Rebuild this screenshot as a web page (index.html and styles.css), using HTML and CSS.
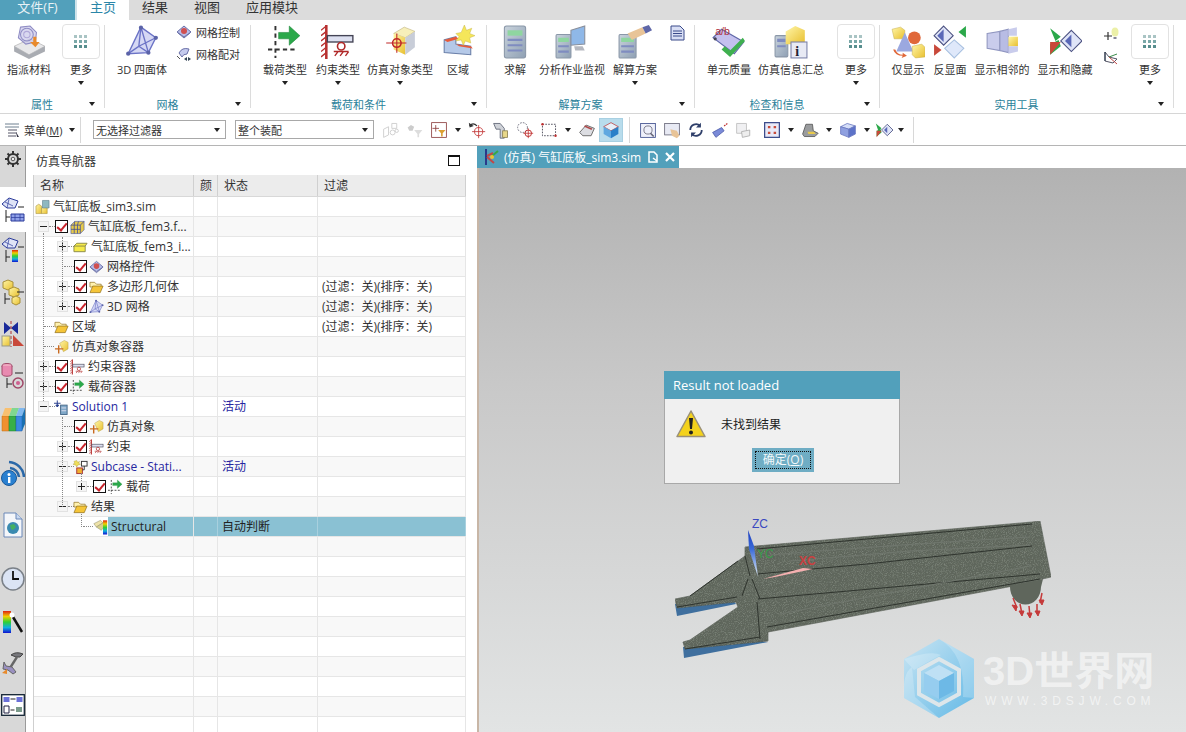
FILE: index.html
```html
<!DOCTYPE html>
<html lang="zh">
<head>
<meta charset="utf-8">
<title>仿真导航器</title>
<link rel="stylesheet" href="styles.css">
</head>
<body>
<svg class="defs" width="0" height="0">
<defs>
<linearGradient id="gy" x1="0" y1="0" x2="1" y2="1"><stop offset="0" stop-color="#fff6a8"/><stop offset="1" stop-color="#e8bf2e"/></linearGradient>
<linearGradient id="gb" x1="0" y1="0" x2="1" y2="1"><stop offset="0" stop-color="#dfe4f7"/><stop offset="1" stop-color="#8f9ad6"/></linearGradient>
<linearGradient id="gs" x1="0" y1="0" x2="1" y2="1"><stop offset="0" stop-color="#c9d3dc"/><stop offset="1" stop-color="#8fa0b4"/></linearGradient>
<linearGradient id="rb" x1="0" y1="0" x2="0" y2="1"><stop offset="0" stop-color="#e02010"/><stop offset=".25" stop-color="#f0d000"/><stop offset=".5" stop-color="#30d030"/><stop offset=".75" stop-color="#10b0e0"/><stop offset="1" stop-color="#1010d0"/></linearGradient>
<linearGradient id="hx" x1="0" y1="0" x2="1" y2="1"><stop offset="0" stop-color="#c9e5f3"/><stop offset="1" stop-color="#63b9e6"/></linearGradient>
<linearGradient id="zaxis" x1="0" y1="0" x2="0" y2="1"><stop offset="0" stop-color="#1a3cc0"/><stop offset=".4" stop-color="#3a6ad8"/><stop offset="1" stop-color="#e4f0f8"/></linearGradient>
<filter id="speck" x="0" y="0" width="100%" height="100%"><feTurbulence type="fractalNoise" baseFrequency="1.100" numOctaves="1" seed="4" result="n"/><feColorMatrix in="n" type="matrix" values="0 0 0 0 .22  0 0 0 0 .25  0 0 0 0 .21  0 0 0 2.600 -1.200" result="d"/><feComposite in="d" in2="SourceAlpha" operator="in" result="c"/><feMerge><feMergeNode in="SourceGraphic"/><feMergeNode in="c"/></feMerge></filter>

<symbol id="i-mat" viewBox="0 0 32 32"><path d="M2 20l15-7 14 7-15 8z" fill="#e8e8ea" stroke="#aaa" stroke-width=".6"/><path d="M2 20v5l14 7v-4zM31 20v5l-15 7v-4z" fill="#a9acb2"/><path d="M8 2l9-1 6 6-1 9-9 2-7-6z" fill="#c9c7ea" fill-opacity=".7" stroke="#8f8cc4"/><circle cx="14" cy="9" r="6" fill="none" stroke="#8f8cc4"/><circle cx="14" cy="9" r="3" fill="none" stroke="#b0a8d8"/><path d="M20 11h3v5h3l-4 5-5-5h3z" fill="#e88a2c"/></symbol>
<symbol id="i-grid" viewBox="0 0 14 14"><g fill="#7aa8a8"><path d="M0 0h3v3H0zM5 0h3v3H5zM10 0h3v3h-3z" fill="#a9c4c4"/><path d="M0 5h3v3H0zM5 5h3v3H5zM10 5h3v3h-3z"/><path d="M0 10h3v3H0zM5 10h3v3H5zM10 10h3v3h-3z" fill="#578e8e"/></g></symbol>
<symbol id="i-tet" viewBox="0 0 32 32"><path d="M15 2L29 12 22 26 3 27z" fill="#d5d8f4" stroke="#6b73c6" stroke-width="1.300"/><path d="M15 2L22 26M15 2L13 20 3 27M13 20L22 26M13 20L29 12" fill="none" stroke="#6b73c6" stroke-width="1.300"/><g fill="#5b63a8"><circle cx="15" cy="2.500" r="2"/><circle cx="29" cy="12" r="2"/><circle cx="22" cy="26" r="2"/><circle cx="3" cy="27" r="2"/></g></symbol>
<symbol id="i-mc" viewBox="0 0 16 16"><path d="M8 2l7 6-7 5-7-5z" fill="#b6bde8" stroke="#6a70a8"/><circle cx="8" cy="7" r="3" fill="#d05050"/><path d="M2 9l6 5 6-5" fill="none" stroke="#6a70a8"/></symbol>
<symbol id="i-mp" viewBox="0 0 16 16"><path d="M3 7q3-6 10-4l-2 5q-4 0-5 3z" fill="#c5cbee" stroke="#6a70a8"/><path d="M1 10l3 3" stroke="#555"/><path d="M8 13l3-2v4zM15 13l-3-2v4z" fill="#345"/></symbol>
<symbol id="i-load" viewBox="0 0 32 32"><path d="M7 1v30M0 23h28" stroke="#333" stroke-width="1.800" stroke-dasharray="4 3" fill="none"/><path d="M10 7h10V1l10 9-10 9v-6H10z" fill="#2ba84a" stroke="#188034" stroke-width=".5"/></symbol>
<symbol id="i-con" viewBox="0 0 32 32"><path d="M5 0v32" stroke="#b83030" stroke-width="2.400"/><path d="M0 5l5-4M0 10l5-4M0 15l5-4M0 20l5-4M0 25l5-4M0 30l5-4" stroke="#b83030" stroke-width="1.300"/><rect x="6" y="10" width="24" height="6" fill="#dde0f0" stroke="#445" stroke-width="1.300"/><circle cx="19" cy="20" r="3.500" fill="none" stroke="#b02828" stroke-width="1.500"/><path d="M12 25h14M13 29l3-4M18 29l3-4M23 29l3-4" stroke="#b02828" stroke-width="1.300"/></symbol>
<symbol id="i-sim" viewBox="0 0 32 32"><path d="M10 8l10-6 10 4-9 6z" fill="#f7efba" stroke="#b5a76a" stroke-width=".5"/><path d="M10 8l11 4v16l-11-5z" fill="url(#gy)"/><path d="M21 12l9-6v15l-9 7z" fill="#c8cdd8"/><path d="M3 17h19M13 8v18" stroke="#c02828"/><circle cx="13" cy="17" r="4" fill="none" stroke="#c02828" stroke-width="1.500"/></symbol>
<symbol id="i-reg" viewBox="0 0 32 32"><path d="M3 14l11-3v7l14 2v8l-25-2z" fill="#b5c9e8" stroke="#6a7fa8"/><path d="M3 14l11-3 3 2-11 3zM14 18l14 2 2 2-13-2z" fill="#e85a3a"/><path d="M22 0l2 5 5-2-2 5 5 2-5 2 1 5-5-2-2 4-2-5-5 1 3-4-3-3 5-1z" fill="#f5e65a" stroke="#c0b040" stroke-width=".4"/></symbol>
<symbol id="i-calc" viewBox="0 0 32 32"><rect x="6" y="1" width="20" height="30" rx="2" fill="url(#gs)" stroke="#8a97a8"/><rect x="9" y="5" width="14" height="5" fill="#8fd6a0"/><path d="M9 13h14v2H9zM9 18h14v2H9zM9 23h14v2H9z" fill="#7f8cc0"/></symbol>
<symbol id="i-mon" viewBox="0 0 32 32"><rect x="1" y="9" width="14" height="22" rx="1" fill="url(#gs)" stroke="#8a97a8"/><rect x="3" y="12" width="10" height="4" fill="#8fd6a0"/><path d="M3 19h10v2H3zM3 24h10v2H3z" fill="#7f8cc0"/><path d="M15 5l13-4v17l-13 1z" fill="#8fb8e8" stroke="#8a8f9a"/><path d="M18 20h8l2 4-9 0z" fill="#b5b8c0"/></symbol>
<symbol id="i-sol" viewBox="0 0 32 32"><rect x="1" y="9" width="16" height="22" rx="1" fill="url(#gs)" stroke="#8a97a8"/><rect x="3" y="12" width="12" height="4" fill="#8fd6a0"/><path d="M3 19h12v2H3zM3 24h12v2H3z" fill="#7f8cc0"/><path d="M9 8l14-6 3 6-13 6z" fill="#e8c498"/><path d="M23 2l6-2 3 5-6 3z" fill="#5f67a8"/></symbol>
<symbol id="i-doc" viewBox="0 0 16 16"><path d="M2 1h9l4 4v10H2z" fill="#d9dff5" stroke="#3a4a8a"/><path d="M4 6h9M4 8.500h9M4 11h9" stroke="#3a4a8a"/></symbol>
<symbol id="i-qual" viewBox="0 0 32 32"><path d="M1 12L9 4l21 12-9 11z" fill="#c4c0ee" stroke="#5f67a8"/><text x="3" y="9" font-size="10" fill="#b0303a" font-family="Liberation Sans">a/b</text><circle cx="3" cy="13" r="1.500" fill="#445"/><path d="M12 20l5 4 12-12 2 3-14 15-8-7z" fill="#3fb04f"/></symbol>
<symbol id="i-info" viewBox="0 0 32 32"><rect x="1" y="10" width="12" height="20" rx="1" fill="url(#gs)" stroke="#8a97a8"/><path d="M3 13h8v3H3zM3 19h8v2H3z" fill="#7f8cc0"/><path d="M11 6l9-5 9 4v13H11z" fill="url(#gy)"/><rect x="16" y="16" width="15" height="15" fill="#e8eaf4" stroke="#7a80a8"/><text x="20" y="29" font-size="13" font-weight="700" font-family="Liberation Serif" fill="#223">i</text></symbol>
<symbol id="i-show" viewBox="0 0 32 32"><path d="M1 4l8-2 4 3v8H3z" fill="url(#gy)" stroke="#c8b050" stroke-width=".5"/><path d="M13 7l8 18H5z" fill="#9ba8e0"/><circle cx="22" cy="12" r="6" fill="#e0683a"/><path d="M20 20l9-2 3 3v9l-9 1-3-3z" fill="url(#gy)" stroke="#c8b050" stroke-width=".5"/><path d="M2 23q2 6 9 6l-1 2 5-2-4-3v2q-5 0-7-5z" fill="#e0683a"/></symbol>
<symbol id="i-rev" viewBox="0 0 32 32"><path d="M10 1l9 9-9 9-9-9z" fill="#dfe4f7" stroke="#4a5080"/><path d="M10 4l-6 6 6 6z" fill="#5a68b8"/><path d="M20 14l9 8-9 9-9-9z" fill="#dfe8fa" stroke="#a8c0e0"/><path d="M31 1v11l-7-5.500z" fill="#2ba84a"/><path d="M1 18v11l7-5.500z" fill="#c8483a"/></symbol>
<symbol id="i-nei" viewBox="0 0 32 32"><path d="M2 8l12-2v18L2 22z" fill="#c9ccec" stroke="#9096c0"/><path d="M14 6l8-2v22l-8-2z" fill="#b8bce4" stroke="#9096c0"/><path d="M22 4l8-2v8h-8z" fill="#c9ccec"/><path d="M22 11h9v9h-9z" fill="url(#gy)"/><path d="M22 20h9v5l-9 2z" fill="#c9ccec"/></symbol>
<symbol id="i-sh" viewBox="0 0 32 32"><path d="M2 3l10 8-5 4zM2 18l8-4 2 6-10 8z" fill="#2ba84a"/><path d="M2 16h10l-10 12z" fill="#c8483a"/><path d="M22 5l10 10-10 10-10-10z" fill="#dfe4f7" stroke="#4a5080"/><path d="M22 9l-6 6 6 6z" fill="#5a68b8"/></symbol>
<symbol id="i-plus" viewBox="0 0 16 16"><path d="M1 9h8M5 5v8" stroke="#333" stroke-width="1.200"/><ellipse cx="12" cy="5" rx="3.500" ry="4.500" fill="#ecf0a8"/><rect x="10.500" y="10" width="3" height="2" fill="#889"/></symbol>
<symbol id="i-cs" viewBox="0 0 16 16"><path d="M2 3v9l8 2 4-4-8-2z" fill="none" stroke="#556"/><path d="M2 3v9" stroke="#234"/><path d="M6 8l8-3" stroke="#3a8a4a"/><path d="M6 8l8 7" stroke="#c04848"/></symbol>
<symbol id="i-menu" viewBox="0 0 16 16"><path d="M1 2h14M1 5h14" stroke="#6e8090"/><path d="M4 8h9M4 11h9M4 14h8" stroke="#556"/><path d="M12 10l3 5-2 0z" fill="#334"/></symbol>
<symbol id="i-ghost" viewBox="0 0 22 22"><g fill="none" stroke="#c8c8c8"><path d="M2 10l6-3v10l-6 3zM12 3h6v6h-6z"/><circle cx="13" cy="14" r="3"/><circle cx="18" cy="12" r="2"/></g></symbol>
<symbol id="i-wf" viewBox="0 0 22 22"><path d="M2 8l4-3 4 2-2 5-4 0z" fill="#ccc"/><path d="M10 11h10l-4 5v4h-2v-4z" fill="#ddd"/></symbol>
<symbol id="i-fbox" viewBox="0 0 22 22"><rect x="2" y="2" width="18" height="18" fill="#fff" stroke="#8a3a3a"/><path d="M7 5v8M3 9h8" stroke="#8a3a3a"/><path d="M10 11h9l-3.500 4v4h-2v-4z" fill="#dca032"/></symbol>
<symbol id="i-undo" viewBox="0 0 22 22"><circle cx="13" cy="13" r="5" fill="none" stroke="#c03030"/><path d="M13 5v16M5 13h16" stroke="#c03030"/><path d="M2 6q4-5 9 0" fill="none" stroke="#333" stroke-width="1.500"/><path d="M1 2l1 6 5-2z" fill="#333"/></symbol>
<symbol id="i-pen" viewBox="0 0 22 22"><path d="M2 3h8l5 6v12h-5V10H5z" fill="#cfd2d8" stroke="#5a6070"/><rect x="13" y="12" width="6" height="8" fill="#e8d88a" stroke="#8a8050"/></symbol>
<symbol id="i-circ" viewBox="0 0 22 22"><circle cx="8" cy="8" r="6" fill="none" stroke="#556" stroke-dasharray="2 1.500"/><circle cx="15" cy="15" r="4" fill="none" stroke="#c03030" stroke-width="1.200"/><path d="M15 9v12M9 15h12" stroke="#c03030"/></symbol>
<symbol id="i-rect" viewBox="0 0 22 22"><rect x="3" y="4" width="16" height="14" fill="none" stroke="#334" stroke-dasharray="2 1.500"/><circle cx="3" cy="4" r="1.500" fill="#c03030"/><circle cx="19" cy="18" r="1.500" fill="#c03030"/></symbol>
<symbol id="i-eraser" viewBox="0 0 22 22"><path d="M2 14l8-9 10 4-4 9-10 0z" fill="#dcdde2" stroke="#555"/><path d="M8 6l9 4" stroke="#b04a4a" stroke-width="2"/></symbol>
<symbol id="i-cube" viewBox="0 0 22 22"><path d="M2 7l9-5 9 5-9 5z" fill="#e6f0fa" stroke="#c04848"/><path d="M2 7l9 5v9l-9-5z" fill="#5fa8e0"/><path d="M20 7l-9 5v9l9-5z" fill="#2a7fc8"/></symbol>
<symbol id="i-zoom" viewBox="0 0 22 22"><rect x="2" y="3" width="18" height="17" fill="#eef0fa" stroke="#3a4a8a"/><circle cx="11" cy="11" r="5" fill="none" stroke="#667"/><path d="M14 15l4 4" stroke="#667" stroke-width="2"/></symbol>
<symbol id="i-hand" viewBox="0 0 22 22"><rect x="2" y="3" width="18" height="14" fill="#e8eaf4" stroke="#667"/><path d="M9 10l8 2 3 6-3 3-6-3z" fill="#e8c498"/></symbol>
<symbol id="i-rot" viewBox="0 0 22 22"><path d="M4 11a7 7 0 0 1 12-5M18 11a7 7 0 0 1-12 5" fill="none" stroke="#2f3f6a" stroke-width="2.200"/><path d="M17 2v6h-6zM5 20v-6h6z" fill="#2f3f6a"/></symbol>
<symbol id="i-wand" viewBox="0 0 22 22"><path d="M2 14l11-6 3 4-10 8z" fill="#7a8ad8" stroke="#4a5aa8"/><path d="M16 6l4-3" stroke="#c03030" stroke-width="1.500" stroke-dasharray="2 1"/></symbol>
<symbol id="i-lay" viewBox="0 0 22 22"><path d="M2 3h12v12H2z" fill="#f0f0f2" stroke="#bbb"/><path d="M8 13l10-2v7l-9 2z" fill="#eee" stroke="#aaa"/></symbol>
<symbol id="i-frame" viewBox="0 0 22 22"><rect x="2" y="2" width="18" height="18" fill="#e9e9f7" stroke="#3a4a8a" stroke-width="1.500"/><path d="M6 6h3v3H6zM13 6h3v3h-3zM6 13h3v3H6zM13 13h3v3h-3z" fill="#c84a3a"/></symbol>
<symbol id="i-shade" viewBox="0 0 22 22"><path d="M2 16l4-12h8l1 8 6 3-4 4H4z" fill="#9a9c9e" stroke="#555"/><path d="M8 13h8l2 3H9z" fill="#e8c94a"/></symbol>
<symbol id="i-box" viewBox="0 0 22 22"><path d="M2 7l8-4 10 3-8 4z" fill="#d5def8" stroke="#6a78c0"/><path d="M2 7l10 3v10L2 16z" fill="#8fa0e0" stroke="#6a78c0"/><path d="M12 10l8-4v10l-8 4z" fill="#5c72c8" stroke="#6a78c0"/></symbol>
<symbol id="i-sh2" viewBox="0 0 22 22"><path d="M1 3l7 6-4 3zM2 12l5-2 1 4-6 5z" fill="#2ba84a"/><path d="M2 12h6l-6 8z" fill="#c8483a"/><path d="M15 4l7 7-7 7-7-7z" fill="#dfe4f7" stroke="#4a5080"/><path d="M15 7l-4 4 4 4z" fill="#5a68b8"/></symbol>
<symbol id="i-root" viewBox="0 0 16 16"><path d="M1 7l3-2 3 2v8H1z" fill="url(#gy)" stroke="#a8903a" stroke-width=".6"/><path d="M7 9l3-2 3 2v6H7z" fill="url(#gy)" stroke="#a8903a" stroke-width=".6"/><path d="M8 1h7v8H8z" fill="#8fb8c0" stroke="#5a7a8a" stroke-width=".6"/></symbol>
<symbol id="i-fem" viewBox="0 0 16 16"><path d="M1 6l4-4h10v9l-4 4H1z" fill="#e6c94a" stroke="#3a4a9a" stroke-width=".6"/><path d="M1 6h10v9M11 6l4-4M4.500 6v9M8 6v9M1 10.500h10M5 2l-.500 4M9 2l-1 4" fill="none" stroke="#3a4a9a" stroke-width=".8"/></symbol>
<symbol id="i-part" viewBox="0 0 16 16"><path d="M1 7l3-3h11l-2 3v6H1z" fill="#f5ea4a" stroke="#8a8a4a"/><path d="M1 7h12" stroke="#8a8a4a"/></symbol>
<symbol id="i-folder" viewBox="0 0 16 16"><path d="M1 3h5l2 2h5v3H1z" fill="#fff2b0" stroke="#8a6a1a" stroke-width=".7"/><path d="M1 14l3-7h11l-3 7z" fill="#f5c538" stroke="#8a6a1a" stroke-width=".7"/></symbol>
<symbol id="i-simc" viewBox="0 0 16 16"><path d="M6 4l5-3 4 2v7l-5 3z" fill="url(#gy)" stroke="#b8a050" stroke-width=".5"/><path d="M1 10h9M5 6v9" stroke="#c96a20" stroke-width="1.500"/></symbol>
<symbol id="i-solu" viewBox="0 0 16 16"><path d="M0 4h7M3.500 1v6M2 6l1.500 2L5 6z" stroke="#223a8a" fill="#223a8a"/><rect x="7" y="6" width="7" height="10" fill="#7fa8c8" stroke="#4a6a8a"/><path d="M8 9h5M8 12h5" stroke="#dde"/></symbol>
<symbol id="i-sub" viewBox="0 0 16 16"><path d="M4 1l1 2 2-1-1 2 2 1-3 1-1 2-1-2-3-1 2-1-1-2z" fill="#f0e05a" stroke="#a89a30" stroke-width=".4"/><rect x="9" y="2" width="6" height="5" fill="#fff" stroke="#333"/><rect x="4" y="9" width="6" height="6" fill="#f0b030" stroke="#a33"/><path d="M12 7v4h-2" fill="none" stroke="#333"/></symbol>
<symbol id="i-res" viewBox="0 0 18 18"><path d="M1 5l8-4 3 3-8 5z" fill="#eee2a8" stroke="#8a8a6a" stroke-width=".6"/><path d="M4 9l8-5 3 3-5 6z" fill="#d8d08a" stroke="#8a8a6a" stroke-width=".6"/><rect x="12" y="1" width="5" height="17" fill="url(#rb)"/></symbol>

<symbol id="r-gear" viewBox="0 0 16 16"><circle cx="8" cy="8" r="5" fill="none" stroke="#333" stroke-width="2"/><circle cx="8" cy="8" r="1.800" fill="#eee" stroke="#555"/><path d="M8 0v3M8 13v3M0 8h3M13 8h3M2.500 2.500l2 2M11.500 11.500l2 2M2.500 13.500l2-2M11.500 4.500l2-2" stroke="#333" stroke-width="2"/></symbol>
<symbol id="r-mesh" viewBox="0 0 24 26"><path d="M1 7l7-6 9 3-3 7-8 0z" fill="#dfe4f7" stroke="#2a3a9a"/><path d="M4 5l8 4M8 2l-2 9" stroke="#2a3a9a" stroke-width=".7"/><path d="M17 10h6" stroke="#222"/><path d="M5 13v12M5 20h4" stroke="#222"/><path d="M10 17h13v7H10z" fill="#8fa0e8" stroke="#2a3a9a"/><path d="M14 17v7M19 17v7M10 20.500h13" stroke="#2a3a9a" stroke-width=".7"/></symbol>
<symbol id="r-meshc" viewBox="0 0 24 26"><path d="M1 7l7-6 9 3-3 7-8 0z" fill="#dfe4f7" stroke="#2a3a9a"/><path d="M4 5l8 4M8 2l-2 9" stroke="#2a3a9a" stroke-width=".7"/><path d="M17 10h6" stroke="#222"/><path d="M5 13v12M5 20h4" stroke="#222"/><rect x="11" y="13" width="6" height="12" fill="url(#rb)"/></symbol>
<symbol id="r-cubes" viewBox="0 0 24 26"><path d="M2 3l5-2 5 2v6l-5 2-5-2z" fill="url(#gy)" stroke="#a8903a"/><path d="M8 10l5-2 5 2v6l-5 2-5-2z" fill="url(#gy)" stroke="#a8903a"/><path d="M16 13h7" stroke="#222"/><path d="M4 14v11M4 20h5" stroke="#222"/><path d="M11 19l4-2 4 2v5l-4 2-4-2z" fill="url(#gy)" stroke="#a8903a"/></symbol>
<symbol id="r-bow" viewBox="0 0 24 26"><path d="M3 1l7 6 7-6v12l-7-6-7 6z" fill="#1a2a9a"/><path d="M10 0v26" stroke="#b03030" stroke-dasharray="3 2"/><rect x="1" y="15" width="8" height="10" fill="url(#gy)" stroke="#998"/><path d="M12 14l11 11H12z" fill="#c8483a"/></symbol>
<symbol id="r-cyl" viewBox="0 0 24 26"><ellipse cx="6" cy="3" rx="5" ry="2.500" fill="#f0a8c0" stroke="#a04868"/><path d="M1 3v8c0 3 10 3 10 0V3" fill="#e88ab0" stroke="#a04868"/><path d="M14 10h8" stroke="#222"/><path d="M6 15v10M6 21h5" stroke="#222"/><circle cx="17" cy="20" r="5" fill="none" stroke="#a04868" stroke-width="1.500"/><circle cx="17" cy="20" r="2" fill="#d06090"/></symbol>
<symbol id="r-books" viewBox="0 0 24 26"><path d="M1 10h7v15H1z" fill="#f09030" stroke="#c07010" stroke-width=".5"/><path d="M8 10h7v15H8z" fill="#38b048" stroke="#188030" stroke-width=".5"/><path d="M15 10h6v15h-6z" fill="#3a8ae0" stroke="#1a5ab0" stroke-width=".5"/><path d="M1 10l3-8h7l-3 8z" fill="#f8c070"/><path d="M8 10l3-8h7l-3 8z" fill="#80d890"/><path d="M15 10l3-8h6l-3 8z" fill="#80b8f0"/><path d="M21 10l3-8v16l-3 7z" fill="#1a70b0"/></symbol>
<symbol id="r-info" viewBox="0 0 24 26"><path d="M8 2a16 16 0 0 1 15 15M9 8a10 10 0 0 1 9 9" fill="none" stroke="#2a68a8" stroke-width="2.600"/><circle cx="8" cy="18" r="7.500" fill="#2a80d0" stroke="#1a5898"/><rect x="7" y="17" width="2.400" height="6" fill="#fff"/><circle cx="8" cy="14.500" r="1.500" fill="#fff"/></symbol>
<symbol id="r-file" viewBox="0 0 24 26"><path d="M3 1h12l6 6v18H3z" fill="#f4f6fa" stroke="#6a88b8"/><path d="M15 1v6h6" fill="#c8d8f0" stroke="#6a88b8"/><circle cx="12" cy="16" r="6" fill="#3a8ab0"/><path d="M9 13l4-1 2 3-3 3-2-1z" fill="#45b060"/></symbol>
<symbol id="r-clock" viewBox="0 0 24 24"><circle cx="12" cy="12" r="11" fill="#dbe4f4" stroke="#7a8088" stroke-width="1.500"/><path d="M12 4v8h6" fill="none" stroke="#111" stroke-width="1.800"/></symbol>
<symbol id="r-rain" viewBox="0 0 24 26"><rect x="2" y="2" width="8" height="22" fill="url(#rb)"/><path d="M12 8l9 15" stroke="#111" stroke-width="2.500"/><circle cx="11" cy="6" r="2.500" fill="#fff"/></symbol>
<symbol id="r-tool" viewBox="0 0 24 26"><path d="M10 5q5-4 12-1l-3 3-4 0z" fill="#77777c" stroke="#444"/><path d="M16 7L9 18" stroke="#666" stroke-width="2.400"/><path d="M3 12l2 4 6 1 4 5-3 2-5-4-5-1z" fill="#9a90c0" stroke="#666"/><path d="M1 23l5-4v5z" fill="#e88a2c"/></symbol>
<symbol id="r-lay" viewBox="0 0 24 22"><rect x=".7" y=".7" width="22.600" height="20.600" fill="#fff" stroke="#123" stroke-width="1.300"/><rect x="2.500" y="3" width="6" height="5" fill="#6a70d8"/><rect x="15.500" y="3" width="6" height="5" fill="#6a70d8"/><path d="M9.500 5h5M9.500 16h4" stroke="#222"/><path d="M3 12h5v7H3z" fill="#fff" stroke="#224"/><rect x="15" y="13" width="6" height="5" fill="#7a9a8a"/></symbol>
<symbol id="i-warn" viewBox="0 0 30 28"><path d="M15 1L29 26.500H1z" fill="#f4d21c" stroke="#9a9078" stroke-width="1.500" stroke-linejoin="round"/><path d="M13 8h4l-1 11h-2z" fill="#222"/><circle cx="15" cy="22.500" r="2" fill="#222"/></symbol>
<symbol id="i-tabsim" viewBox="0 0 16 18"><path d="M2 1v16" stroke="#2a3a8a" stroke-width="2"/><path d="M3 8l6-3M3 9l7 6" stroke="#c04848" stroke-width="2"/><path d="M8 8l6-5" stroke="#38a848" stroke-width="2"/><circle cx="8" cy="9" r="2" fill="#f0c030"/></symbol>
</defs>
</svg>

<div class="app">
  <nav class="tabs">
    <span class="tab file">文件(F)</span>
    <span class="tab home">主页</span>
    <span class="tab t52">结果</span>
    <span class="tab t52">视图</span>
    <span class="tab t78">应用模块</span>
  </nav>

  <section class="ribbon">
    <div class="group g1">
      <div class="items">
        <div class="item w58"><svg class="ic"><use href="#i-mat"/></svg><span class="lb">指派材料</span></div>
        <div class="item w46"><span class="more"><svg class="gr"><use href="#i-grid"/></svg></span><span class="lb">更多</span><i class="caret big"></i></div>
      </div>
      <div class="foot"><span class="title">属性</span><i class="fc"></i></div>
    </div>
    <div class="group g2">
      <div class="items">
        <div class="item w70 ml2"><svg class="ic"><use href="#i-tet"/></svg><span class="lb">3D 四面体</span></div>
        <div class="smalls">
          <div class="small"><svg class="s16"><use href="#i-mc"/></svg><span>网格控制</span></div>
          <div class="small"><svg class="s16"><use href="#i-mp"/></svg><span>网格配对</span></div>
        </div>
      </div>
      <div class="foot"><span class="title">网格</span><i class="fc"></i></div>
    </div>
    <div class="group g3">
      <div class="items pl7">
        <div class="item w54"><svg class="ic"><use href="#i-load"/></svg><span class="lb">载荷类型</span><i class="caret big"></i></div>
        <div class="item w52"><svg class="ic"><use href="#i-con"/></svg><span class="lb">约束类型</span><i class="caret big"></i></div>
        <div class="item w72"><svg class="ic"><use href="#i-sim"/></svg><span class="lb">仿真对象类型</span><i class="caret big"></i></div>
        <div class="item w44"><svg class="ic"><use href="#i-reg"/></svg><span class="lb">区域</span></div>
      </div>
      <div class="foot"><span class="title">载荷和条件</span><i class="fc"></i></div>
    </div>
    <div class="group g4">
      <div class="items">
        <div class="item w56"><svg class="ic"><use href="#i-calc"/></svg><span class="lb">求解</span></div>
        <div class="item w58"><svg class="ic"><use href="#i-mon"/></svg><span class="lb">分析作业监视</span></div>
        <div class="item w68"><svg class="ic"><use href="#i-sol"/></svg><span class="lb">解算方案</span><i class="caret big"></i></div>
        <svg class="s16 docic"><use href="#i-doc"/></svg>
      </div>
      <div class="foot"><span class="title">解算方案</span><i class="fc"></i></div>
    </div>
    <div class="group g5">
      <div class="items">
        <div class="item w68"><svg class="ic"><use href="#i-qual"/></svg><span class="lb">单元质量</span></div>
        <div class="item w56"><svg class="ic"><use href="#i-info"/></svg><span class="lb">仿真信息汇总</span></div>
        <div class="item w38 ml18"><span class="more"><svg class="gr"><use href="#i-grid"/></svg></span><span class="lb">更多</span><i class="caret big"></i></div>
      </div>
      <div class="foot"><span class="title">检查和信息</span><i class="fc"></i></div>
    </div>
    <div class="group g6">
      <div class="items pl4">
        <div class="item w48"><svg class="ic"><use href="#i-show"/></svg><span class="lb">仅显示</span></div>
        <div class="item w36"><svg class="ic"><use href="#i-rev"/></svg><span class="lb">反显面</span></div>
        <div class="item w68"><svg class="ic"><use href="#i-nei"/></svg><span class="lb">显示相邻的</span></div>
        <div class="item w58"><svg class="ic"><use href="#i-sh"/></svg><span class="lb">显示和隐藏</span></div>
        <div class="stack w34"><svg class="s16"><use href="#i-plus"/></svg><svg class="s16"><use href="#i-cs"/></svg></div>
        <div class="item w38 ml3"><span class="more"><svg class="gr"><use href="#i-grid"/></svg></span><span class="lb">更多</span><i class="caret big"></i></div>
      </div>
      <div class="foot"><span class="title">实用工具</span><i class="fc"></i></div>
    </div>
  </section>

  <section class="toolbar">
    <svg class="s16 menuic"><use href="#i-menu"/></svg>
    <span class="menu">菜单(<u>M</u>)</span><i class="caret c-menu"></i>
    <span class="sep s1"></span>
    <div class="sel w133"><span>无选择过滤器</span><i class="caret big"></i></div>
    <div class="sel w139"><span>整个装配</span><i class="caret big"></i></div>
    <div class="tools">
      <span class="t"><svg class="s18"><use href="#i-ghost"/></svg></span>
      <span class="t"><svg class="s18"><use href="#i-wf"/></svg></span>
      <span class="t"><svg class="s18"><use href="#i-fbox"/></svg></span><span class="c"><i class="caret"></i></span>
      <span class="t"><svg class="s18"><use href="#i-undo"/></svg></span>
      <span class="t"><svg class="s18"><use href="#i-pen"/></svg></span>
      <span class="t"><svg class="s18"><use href="#i-circ"/></svg></span>
      <span class="t"><svg class="s18"><use href="#i-rect"/></svg></span><span class="c"><i class="caret"></i></span>
      <span class="t"><svg class="s18"><use href="#i-eraser"/></svg></span>
      <span class="t on"><svg class="s18"><use href="#i-cube"/></svg></span>
      <span class="sep s2"></span>
      <span class="t"><svg class="s18"><use href="#i-zoom"/></svg></span>
      <span class="t"><svg class="s18"><use href="#i-hand"/></svg></span>
      <span class="t"><svg class="s18"><use href="#i-rot"/></svg></span>
      <span class="t"><svg class="s18"><use href="#i-wand"/></svg></span>
      <span class="t"><svg class="s18"><use href="#i-lay"/></svg></span>
      <span class="t ml4"><svg class="s18"><use href="#i-frame"/></svg></span><span class="c"><i class="caret"></i></span>
      <span class="t"><svg class="s18"><use href="#i-shade"/></svg></span><span class="c"><i class="caret"></i></span>
      <span class="t"><svg class="s18"><use href="#i-box"/></svg></span><span class="c n"><i class="caret"></i></span>
      <span class="t n"><svg class="s18"><use href="#i-sh2"/></svg></span><span class="c n"><i class="caret"></i></span>
      <span class="sep s3"></span>
    </div>
  </section>

  <main class="main">
    <aside class="rail">
      <div class="rtop"><svg class="r16"><use href="#r-gear"/></svg></div>
      <div class="ract"><svg class="ri first"><use href="#r-mesh"/></svg></div>
      <svg class="ri m3"><use href="#r-meshc"/></svg>
      <svg class="ri"><use href="#r-cubes"/></svg>
      <svg class="ri"><use href="#r-bow"/></svg>
      <svg class="ri"><use href="#r-cyl"/></svg>
      <svg class="ri m13"><use href="#r-books"/></svg>
      <svg class="ri m25"><use href="#r-info"/></svg>
      <svg class="ri m22"><use href="#r-file"/></svg>
      <svg class="ri m25"><use href="#r-clock"/></svg>
      <svg class="ri m13"><use href="#r-rain"/></svg>
      <svg class="ri m11"><use href="#r-tool"/></svg>
      <svg class="ri"><use href="#r-lay"/></svg>
    </aside>

    <section class="nav">
      <header class="navhead"><span>仿真导航器</span><span class="maxbox"></span></header>
      <div class="table">
        <div class="row head"><div>名称</div><div>颜</div><div>状态</div><div>过滤</div></div>
        <div class="guide v1"></div><div class="guide v2"></div><div class="guide v3"></div><div class="guide v4"></div><div class="guide v5"></div>

        <div class="row"><div class="name d0"><svg class="ti"><use href="#i-root"/></svg><span>气缸底板_sim3.sim</span></div><div></div><div></div><div></div></div>
        <div class="row"><div class="name d1"><b class="ex minus"></b><s class="h"></s><b class="ck"></b><svg class="ti"><use href="#i-fem"/></svg><span>气缸底板_fem3.f...</span></div><div></div><div></div><div></div></div>
        <div class="row"><div class="name d2"><b class="ex"></b><s class="h"></s><svg class="ti"><use href="#i-part"/></svg><span>气缸底板_fem3_i...</span></div><div></div><div></div><div></div></div>
        <div class="row"><div class="name d2b"><s class="h long"></s><b class="ck"></b><svg class="ti"><use href="#i-mc"/></svg><span>网格控件</span></div><div></div><div></div><div></div></div>
        <div class="row"><div class="name d2"><b class="ex"></b><s class="h"></s><b class="ck"></b><svg class="ti"><use href="#i-folder"/></svg><span>多边形几何体</span></div><div></div><div></div><div>(过滤：关)(排序：关)</div></div>
        <div class="row"><div class="name d2"><b class="ex"></b><s class="h"></s><b class="ck"></b><svg class="ti"><use href="#i-tet"/></svg><span>3D 网格</span></div><div></div><div></div><div>(过滤：关)(排序：关)</div></div>
        <div class="row"><div class="name d1b"><s class="h long"></s><svg class="ti"><use href="#i-folder"/></svg><span>区域</span></div><div></div><div></div><div>(过滤：关)(排序：关)</div></div>
        <div class="row"><div class="name d1b"><s class="h long"></s><svg class="ti"><use href="#i-simc"/></svg><span>仿真对象容器</span></div><div></div><div></div><div></div></div>
        <div class="row"><div class="name d1"><b class="ex"></b><s class="h"></s><b class="ck"></b><svg class="ti"><use href="#i-con"/></svg><span>约束容器</span></div><div></div><div></div><div></div></div>
        <div class="row"><div class="name d1"><b class="ex"></b><s class="h"></s><b class="ck"></b><svg class="ti"><use href="#i-load"/></svg><span>载荷容器</span></div><div></div><div></div><div></div></div>
        <div class="row"><div class="name d1"><b class="ex minus"></b><s class="h"></s><svg class="ti"><use href="#i-solu"/></svg><span class="act">Solution 1</span></div><div></div><div class="act">活动</div><div></div></div>
        <div class="row"><div class="name d2b"><s class="h long"></s><b class="ck"></b><svg class="ti"><use href="#i-simc"/></svg><span>仿真对象</span></div><div></div><div></div><div></div></div>
        <div class="row"><div class="name d2"><b class="ex"></b><s class="h"></s><b class="ck"></b><svg class="ti"><use href="#i-con"/></svg><span>约束</span></div><div></div><div></div><div></div></div>
        <div class="row"><div class="name d2"><b class="ex minus"></b><s class="h"></s><svg class="ti"><use href="#i-sub"/></svg><span class="act">Subcase - Stati...</span></div><div></div><div class="act">活动</div><div></div></div>
        <div class="row"><div class="name d3"><b class="ex"></b><s class="h"></s><b class="ck"></b><svg class="ti"><use href="#i-load"/></svg><span>载荷</span></div><div></div><div></div><div></div></div>
        <div class="row"><div class="name d2"><b class="ex minus"></b><s class="h"></s><svg class="ti"><use href="#i-folder"/></svg><span>结果</span></div><div></div><div></div><div></div></div>
        <div class="row sel-row"><div class="name d3b"><s class="h long"></s><svg class="ti"><use href="#i-res"/></svg><span class="selname">Structural</span></div><div></div><div>自动判断</div><div></div></div>
        <div class="row"><div></div><div></div><div></div><div></div></div>
        <div class="row"><div></div><div></div><div></div><div></div></div>
        <div class="row"><div></div><div></div><div></div><div></div></div>
        <div class="row"><div></div><div></div><div></div><div></div></div>
        <div class="row"><div></div><div></div><div></div><div></div></div>
        <div class="row"><div></div><div></div><div></div><div></div></div>
        <div class="row"><div></div><div></div><div></div><div></div></div>
        <div class="row"><div></div><div></div><div></div><div></div></div>
        <div class="row"><div></div><div></div><div></div><div></div></div>
        <div class="row"><div></div><div></div><div></div><div></div></div>
      </div>
    </section>

    <section class="view">
      <div class="viewtabs">
        <div class="vtab"><svg class="vti"><use href="#i-tabsim"/></svg><span>(仿真) 气缸底板_sim3.sim</span><svg class="vdoc" viewBox="0 0 12 12"><path d="M2 1h5l3 3v7H2z" fill="none" stroke="#fff" stroke-width="1.500"/><path d="M6 7l4 3" stroke="#fff" stroke-width="1.500"/></svg><svg class="vx" viewBox="0 0 10 10"><path d="M1 1l8 8M9 1l-8 8" stroke="#fff" stroke-width="2.200"/></svg></div>
      </div>
      <div class="canvas">
        <svg class="scene" viewBox="477 169 709 563">
          <g class="mark">
            <path d="M939 640l35 20v39l-35 20-35-20v-39z" fill="url(#hx)"/>
            <path d="M939 640q27 15 24 58l11 1v-39zM904 660q28-9 37-4l-13 7-14 8zM904 699q-2-24 8-31l3 30 24 21z" fill="#fff" fill-opacity=".22"/>
            <path d="M939 660l20 11v24l-20 11-20-11v-24z" fill="none" stroke="#dde6ea" stroke-width="4"/>
            <path d="M939 666l15 8-15 8-15-8z" fill="#bfe0f4"/><path d="M924 674l15 8v18l-15-8z" fill="#96cdef"/><path d="M954 674l-15 8v18l15-8z" fill="#6db9e6"/>
            <text class="wm1" x="983" y="686">3D世界网</text>
            <text class="wm2" x="985" y="706">WWW.3DSJW.COM</text>
          </g>
          <g class="model">
            <path d="M675 605l58-4 3 4-59 12zM683 648l78-6 7 1-84 16z" fill="#3f6f9e"/>
            <path d="M675 600l15-3 55-40v-9l287-25 8-1 11 56-43 10-240 45v9l-83 8-2-7 7-2 48-33-2-5-59 6z" fill="#5f665c" stroke="#4f554d" stroke-width=".6" filter="url(#speck)"/>
            <path d="M757 550l275-25M757 575l110-10 165-18M758 600l282-25M767 628l273-48M677 608l60-10M685 650l75-12M748 580l-6 17M752 580l8 20M757 603l3 37M745 557l5 20M690 597l48-35" fill="none" stroke="#2f342e" stroke-width="1"/>
            <path d="M790 562l120-10 120-6M770 556q120-10 260-18M780 615l250-48" fill="none" stroke="#70776e" stroke-width="1"/>
            <path d="M1010 588a15 17 0 0 0 31 0l2-8-34 7z" fill="#5f665c"/>
          </g>
          <g class="arrows" stroke="#c53a3a" fill="#c53a3a">
            <path d="M1013 599l4 10M1020 605l2 10M1029 607l1 11M1037 605v9M1042 594l-2 10" stroke-width="1.500"/>
            <path d="M1012 606l5 1-1 5zM1019 612h5l-2 5zM1027 614h5l-2 5zM1035 612h5l-2 5zM1039 601h5l-2 5z"/>
          </g>
          <path d="M748 531l6 16 4 31-9-28z" fill="url(#zaxis)"/>
          <path d="M763 580l40-11 10 1-38 8z" fill="#f5b0b0"/>
          <text class="axis zc" x="752" y="529">ZC</text>
          <text class="axis yc" x="757" y="559">YC</text>
          <text class="axis xc" x="799" y="566">XC</text>
        </svg>
        <div class="dialog">
          <div class="dhead">Result not loaded</div>
          <div class="dbody">
            <div class="dmsg"><svg class="warn"><use href="#i-warn"/></svg><span>未找到结果</span></div>
            <div class="dact"><span class="okbtn"><span>确定(<u>O</u>)</span></span></div>
          </div>
        </div>
      </div>
    </section>
  </main>
</div>
</body>
</html>
```
FILE: styles.css
```css
* { box-sizing: border-box; }
html, body { margin: 0; padding: 0; }
body { width: 1186px; height: 732px; overflow: hidden; background: #fff; color: #333;
  font-family: "Open Sans", "Noto Sans CJK SC", sans-serif; font-size: 12px; }
.defs { position: absolute; }
.app { width: 1186px; height: 732px; display: flex; flex-direction: column; }

.tabs { height: 20px; flex: none; background: #dcdcdc; display: flex; font-size: 13px; line-height: 14px; color: #333; }
.tab { display: block; text-align: center; height: 20px; }
.file { width: 75px; margin-right: 2px; background: #52a0bb; color: #e8f2f6; }
.home { width: 52px; background: #fff; color: #2a86a8; box-shadow: -2px 0 0 #cfe3ea; }
.t52 { width: 52px; }
.t78 { width: 78px; }

.ribbon { height: 94px; flex: none; background: #fff; border-bottom: 1px solid #d6d6d6; display: flex; padding-top: 5px; align-items: flex-start; }
.group { height: 83px; border-right: 1px solid #dcdcdc; display: flex; flex-direction: column; flex: none; }
.g1 { width: 105px; } .g2 { width: 146px; } .g3 { width: 236px; } .g4 { width: 208px; } .g5 { width: 185px; } .g6 { width: 294px; }
.items { height: 72px; display: flex; }
.pl7 { padding-left: 7px; } .pl4 { padding-left: 4px; }
.item { display: flex; flex-direction: column; align-items: center; flex: none; }
.w58 { width: 58px; } .w46 { width: 46px; } .w70 { width: 70px; } .w54 { width: 54px; } .w52 { width: 52px; }
.w72 { width: 72px; } .w44 { width: 44px; } .w56 { width: 56px; } .w68 { width: 68px; } .w38 { width: 38px; }
.w48 { width: 48px; } .w36 { width: 36px; } .w34 { width: 34px; }
.ml2 { margin-left: 2px; } .ml18 { margin-left: 18px; } .ml3 { margin-left: 3px; } .ml4 { margin-left: 4px; }
.ic { width: 34px; height: 34px; display: block; }
.lb { font-size: 11px; line-height: 14px; margin-top: 4px; white-space: nowrap; color: #333; }
.more { width: 38px; height: 35px; margin-top: -1px; border: 1px solid #e2e2e2; border-radius: 4px; display: flex; align-items: center; justify-content: center; }
.gr { width: 14px; height: 14px; display: block; }
.caret { display: block; width: 0; height: 0; border-left: 3px solid transparent; border-right: 3px solid transparent; border-top: 4px solid #222; }
.item .caret { margin-top: 4px; }
.foot { height: 11px; display: flex; line-height: 14px; font-size: 11px; color: #2a7f9a; padding-top: 1px; }
.title { flex: 1; text-align: center; white-space: nowrap; }
.fc { width: 20px; display: block; flex: none; }
.fc::after { content: ""; display: block; width: 0; height: 0; margin: 4px 0 0 5px; border-left: 3px solid transparent; border-right: 3px solid transparent; border-top: 4px solid #222; }
.smalls { display: flex; flex-direction: column; gap: 8px; margin-left: -1px; }
.small { height: 14px; display: flex; align-items: center; gap: 4px; font-size: 11px; white-space: nowrap; }
.s16 { width: 16px; height: 16px; display: block; flex: none; }
.stack { display: flex; flex-direction: column; align-items: center; gap: 6px; padding-top: 2px; }

.toolbar { height: 31px; flex: none; background: #fff; display: flex; align-items: center; padding-left: 4px; }
.menuic { margin-right: 4px; }
.menu { font-size: 11px; width: 44px; white-space: nowrap; }
.c-menu { margin-left: 1px; }
.sep { display: block; width: 1px; background: #d8d8d8; flex: none; height: 26px; }
.s1 { margin: 0 12px 0 5px; }
.sel { height: 19px; border: 1px solid #a8a8a8; display: flex; align-items: center; justify-content: space-between; padding: 0 5px 0 2px; font-size: 11px; flex: none; background: #fff; }
.w133 { width: 133px; margin-right: 9px; }
.w139 { width: 139px; margin-right: 5px; }
.tools { display: flex; align-items: center; }
.t { width: 24px; height: 24px; display: flex; align-items: center; justify-content: center; flex: none; }
.t.n { width: 21px; }
.t.on { background: #b8dcec; border: 1px solid #a8d0e2; }
.c { width: 14px; display: flex; justify-content: center; flex: none; }
.c.n { width: 13px; }
.s18 { width: 18px; height: 18px; display: block; }
.s2 { margin: 0 6px 0 6px; }
.s3 { margin-left: 6px; }

.main { flex: 1; display: flex; min-height: 0; border-top: 1px solid #b5b5b5; }
.rail { width: 26px; flex: none; background: #d8d8d8; border-right: 1px solid #9a9a9a; display: flex; flex-direction: column; align-items: center; }
.rtop { height: 41px; width: 100%; display: flex; justify-content: center; padding-top: 5px; }
.r16 { width: 16px; height: 16px; display: block; }
.ract { width: 26px; margin-right: -1px; height: 45px; background: #fff; display: flex; align-items: center; justify-content: center; flex: none; }
.ri { width: 24px; height: 28px; display: block; flex: none; margin-top: 14px; }
.ri.first { margin-top: 0; }
.m3 { margin-top: 4px; } .m13 { margin-top: 15px; } .m25 { margin-top: 26px; } .m22 { margin-top: 24px; } .m11 { margin-top: 13px; }

.nav { width: 451px; flex: none; background: #fff; padding: 0 11px 0 7px; }
.navhead { height: 29px; display: flex; justify-content: space-between; align-items: center; padding: 0 6px 0 3px; }
.maxbox { width: 12px; height: 11px; border: 1px solid #111; border-top-width: 2px; }
.table { position: relative; border-left: 1px solid #cfcfcf; }
.row { display: grid; grid-template-columns: 160px 24px 100px 148px; height: 20px; border-bottom: 1px solid #e6e6e6; line-height: 19px; }
.row:nth-child(odd) { background: #fff; }
.row:nth-child(even) { background: #f8f8f8; }
.row > div { border-right: 1px solid #e6e6e6; padding-left: 4px; white-space: nowrap; overflow: hidden; }
.row.head { height: 22px; line-height: 21px; background: #ececec; border-bottom-color: #d8d8d8; }
.row.head > div { border-right-color: #d0d0d0; padding-left: 6px; }
.name { display: flex; align-items: center; }
.row > .d0 { padding-left: 1px; }
.row > .d1 { padding-left: 4px; }
.row > .d1b { padding-left: 10px; }
.row > .d2 { padding-left: 23px; }
.row > .d2b { padding-left: 30px; }
.row > .d3 { padding-left: 42px; }
.row > .d3b { padding-left: 49px; padding-right: 0; }
.ex { width: 11px; height: 11px; flex: none; background: #f4f4f4; border: 1px solid #e2e2e2; position: relative; display: block; }
.ex::before { content: ""; position: absolute; left: 1px; right: 1px; top: 4px; height: 1px; background: #222; }
.ex::after { content: ""; position: absolute; top: 1px; bottom: 1px; left: 4px; width: 1px; background: #222; }
.ex.minus::after { display: none; }
.h { display: block; width: 6px; height: 0; border-top: 1px dotted #888; flex: none; }
.h.long { width: 10px; }
.h + .ti { margin-left: -1px; }
.h.long + .ti { margin-left: 0; }
.ck { width: 13px; height: 13px; flex: none; display: block; margin-right: 2px; border: 1px solid #111; background: #fff; position: relative; }
.ck::after { content: ""; position: absolute; left: 3px; top: 0; width: 4px; height: 8px; border: solid #c8242c; border-width: 0 2.500px 2.500px 0; transform: rotate(40deg); }
.ti { width: 15px; height: 16px; flex: none; display: block; margin-right: 3px; }
.act { color: #2626a0; }
.row.sel-row { background: #fff; color: #222; }
.row.sel-row > div:not(.name) { background: #8ac1d3; border-right-color: #a8d0de; }
.selname { background: #8ac1d3; flex: 1; line-height: 19px; height: 19px; margin-left: -3px; padding-left: 3px; align-self: flex-start; }
.guide { position: absolute; width: 0; border-left: 1px dotted #888; z-index: 1; }
.v1 { left: 9px; top: 58px; height: 168px; }
.v2 { left: 28px; top: 62px; height: 70px; }
.v3 { left: 28px; top: 242px; height: 90px; }
.v4 { left: 47px; top: 298px; height: 8px; }
.v5 { left: 47px; top: 339px; height: 13px; }

.view { flex: 1; display: flex; flex-direction: column; min-width: 0; background: #fff; }
.viewtabs { height: 22px; flex: none; display: flex; }
.vtab { width: 202px; height: 22px; background: #52a0bb; display: flex; align-items: center; padding-left: 7px; color: #fff; font-size: 12px; white-space: nowrap; }
.vti { width: 16px; height: 18px; margin-right: 4px; flex: none; }
.vdoc { width: 12px; height: 12px; margin-left: 6px; flex: none; }
.vx { width: 10px; height: 10px; margin-left: 6px; flex: none; }
.canvas { flex: 1; position: relative; background: linear-gradient(180deg, #b2b2b2 0%, #c9c9c9 40%, #e2e4e4 100%); border-left: 2px solid #c8b6a6; overflow: hidden; }
.scene { position: absolute; left: -2px; top: 0; width: 709px; height: 563px; display: block; }
.wm1 { font-family: "Liberation Sans", "Noto Sans CJK SC", sans-serif; font-size: 40px; font-weight: 700; fill: #fff; fill-opacity: .55; }
.wm2 { font-family: "Liberation Sans", sans-serif; font-size: 12px; letter-spacing: 4.800px; fill: #fff; fill-opacity: .6; }
.axis { font-family: "Liberation Sans", sans-serif; font-size: 12px; }
.zc { fill: #3a48c0; }
.yc { fill: #3a9a4a; }
.xc { fill: #c84040; font-weight: 700; }

.dialog { position: absolute; left: 185px; top: 203px; width: 236px; height: 113px; background: #f0f0f0; border: 1px solid #a8a8a8; border-top: none; display: flex; flex-direction: column; }
.dhead { height: 28px; flex: none; margin: 0 -1px; background: #52a0bb; color: #fff; font-size: 13px; line-height: 28px; padding-left: 9px; }
.dbody { flex: 1; display: flex; flex-direction: column; padding: 11px 0 0 11px; }
.dmsg { display: flex; align-items: center; gap: 15px; height: 28px; color: #222; }
.warn { width: 30px; height: 28px; display: block; flex: none; }
.dact { margin-top: 10px; padding-left: 76px; }
.okbtn { display: block; width: 62px; height: 24px; padding: 3px; background: #6fadc4; color: #f2f8fa; font-size: 12px; }
.okbtn span { display: block; height: 18px; border: 1px dotted #111; line-height: 16px; text-align: center; }
```
